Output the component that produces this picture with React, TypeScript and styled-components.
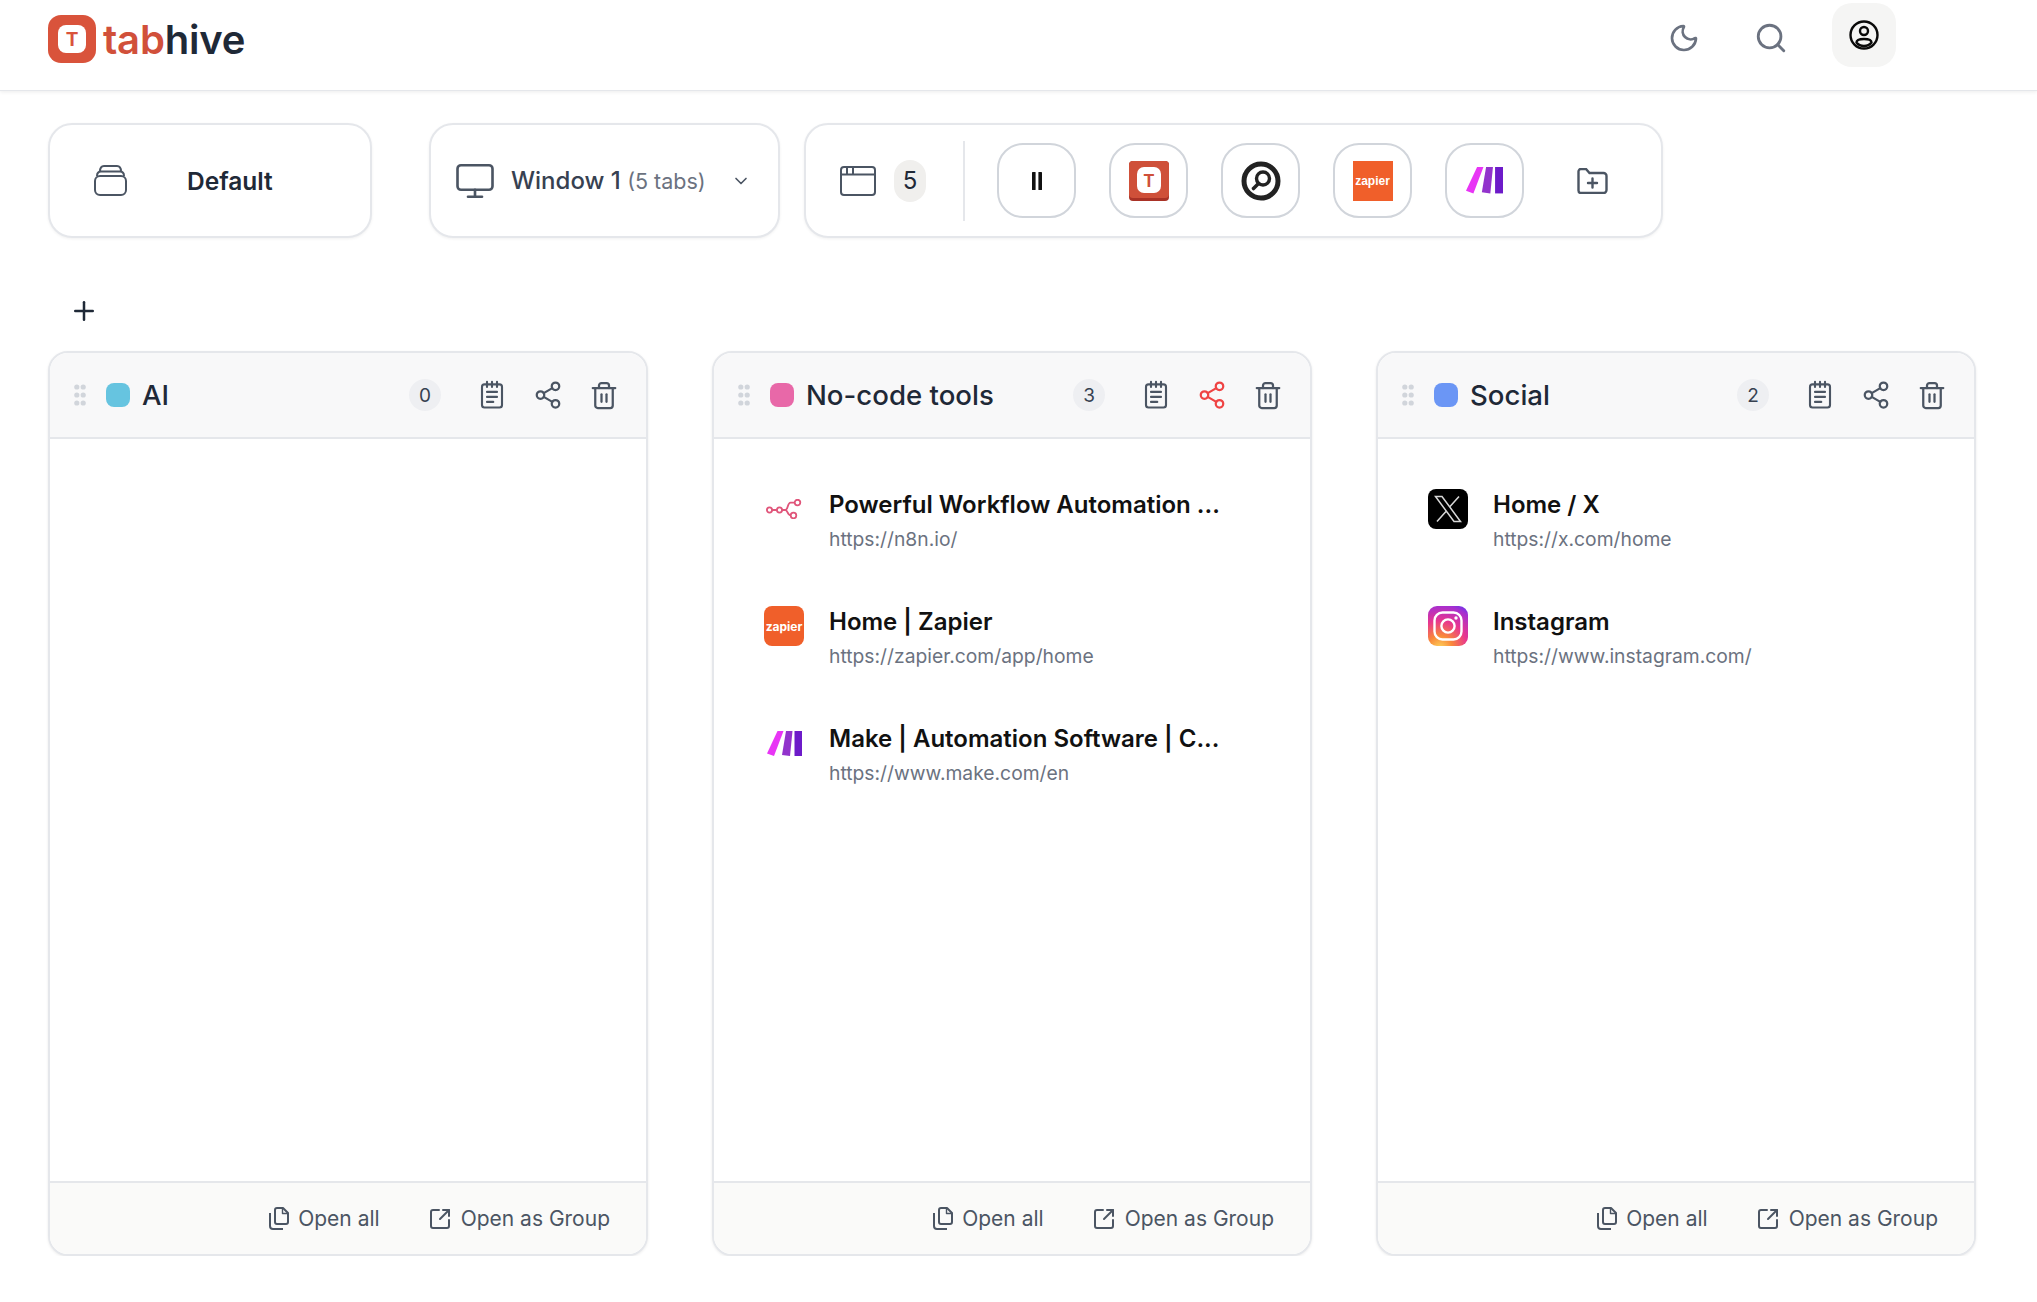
import styled, { createGlobalStyle } from "styled-components";
import { Moon, Search, Monitor, ChevronDown, Plus, Share2, Trash2, SquareArrowOutUpRight } from "lucide-react";

// ------- data -------
type Favicon = "n8n" | "zapier" | "make" | "x" | "instagram";

const groups: {
  name: string;
  color: string;
  active?: boolean;
  tabs: { title: string; url: string; icon: Favicon }[];
}[] = [
  { name: "AI", color: "#66c4e0", tabs: [] },
  {
    name: "No-code tools",
    color: "#e868a8",
    active: true,
    tabs: [
      { title: "Powerful Workflow Automation ...", url: "https://n8n.io/", icon: "n8n" },
      { title: "Home | Zapier", url: "https://zapier.com/app/home", icon: "zapier" },
      { title: "Make | Automation Software | C...", url: "https://www.make.com/en", icon: "make" },
    ],
  },
  {
    name: "Social",
    color: "#6b96f5",
    tabs: [
      { title: "Home / X", url: "https://x.com/home", icon: "x" },
      { title: "Instagram", url: "https://www.instagram.com/", icon: "instagram" },
    ],
  },
];

// ------- drawn icons -------
function TabhiveMark({ size }: { size: number }) {
  return (
    <svg width={size} height={size} viewBox="0 0 48 48">
      <rect width="48" height="48" rx="13" fill="#d9533b" />
      <rect x="10" y="10" width="28" height="28" rx="8" fill="#fff" />
      <text x="24" y="31" textAnchor="middle" fontFamily="Inter, sans-serif" fontWeight="700" fontSize="19" fill="#d9533b">
        T
      </text>
    </svg>
  );
}

function TabhiveTile() {
  return (
    <svg width="40" height="40" viewBox="0 0 40 40">
      <rect width="40" height="40" rx="4" fill="#a93226" />
      <rect width="40" height="37" rx="4" fill="#cf5039" />
      <rect x="8" y="6" width="24" height="26" rx="7" fill="#fff" />
      <text x="20" y="25.500" textAnchor="middle" fontFamily="Inter, sans-serif" fontWeight="700" fontSize="17" fill="#cf5039">
        T
      </text>
    </svg>
  );
}

function PieMark() {
  return (
    <svg width="40" height="40" viewBox="0 0 40 40" fill="none" stroke="#222" strokeLinecap="round">
      <circle cx="20" cy="20" r="17" strokeWidth="5" />
      <circle cx="22" cy="17.500" r="6.500" strokeWidth="3.400" />
      <path d="M17.500 22.500 12.500 27.500" strokeWidth="3.600" />
    </svg>
  );
}

function MakeMark({ width }: { width: number }) {
  return (
    <svg width={width} height={(width * 25) / 35} viewBox="0 0 35 25">
      <path d="M0 22.500 10.500 0h6L7 25z" fill="#e835f5" />
      <path d="M15 24 19 0h6.500L23 25z" fill="#9233cc" />
      <path d="M27.500 0H35v25h-7.500z" fill="#6d1bc9" />
    </svg>
  );
}

function N8nMark() {
  return (
    <svg width="36" height="20" viewBox="0 0 36 20" fill="none" stroke="#e0557a" strokeWidth="1.800">
      <circle cx="3.500" cy="11" r="2.600" />
      <circle cx="13.500" cy="11" r="2.600" />
      <circle cx="31.500" cy="3.600" r="2.800" />
      <circle cx="27.500" cy="16.500" r="2.800" />
      <path d="M6 11h5M16 11h3.500c2.500 0 2-7.400 5-7.400h4.200M19.500 11c2 0 2 5.500 5.300 5.500" />
    </svg>
  );
}

function XMark() {
  return (
    <svg width="40" height="40" viewBox="0 0 40 40" fill="none">
      <rect width="40" height="40" rx="8" fill="#000" />
      <path d="M7.500 7.500h6.500l18.500 25H26zM31 7.500 21.800 17.800M9 32.500l9.600-10.800" stroke="#d8d8d8" strokeWidth="1.500" />
    </svg>
  );
}

function InstagramMark() {
  return (
    <svg width="40" height="40" viewBox="0 0 40 40" fill="none">
      <defs>
        <radialGradient id="ig" cx="0.3" cy="1.05" r="1.25">
          <stop offset="0" stopColor="#fdd35a" />
          <stop offset="0.25" stopColor="#f9873a" />
          <stop offset="0.55" stopColor="#e8368f" />
          <stop offset="0.85" stopColor="#a62fd0" />
          <stop offset="1" stopColor="#5a35f0" />
        </radialGradient>
      </defs>
      <rect width="40" height="40" rx="9" fill="url(#ig)" />
      <rect x="6.500" y="6.500" width="27" height="27" rx="8" stroke="#fff" strokeWidth="2.400" />
      <circle cx="20" cy="20" r="6.600" stroke="#fff" strokeWidth="2.400" />
      <circle cx="28" cy="12" r="1.700" fill="#fff" />
    </svg>
  );
}

function UserIcon() {
  return (
    <svg width="32" height="32" viewBox="0 0 32 32" fill="none" stroke="#0a0a0a" strokeWidth="2.400">
      <circle cx="16" cy="16" r="13.500" />
      <circle cx="16" cy="12" r="4" />
      <path d="M8.500 23.500c0-2.500 3-3.500 7.500-3.500s7.500 1 7.500 3.500c-1.500 2-4.500 3.500-7.500 3.500s-6-1.500-7.500-3.500z" />
    </svg>
  );
}

function StackIcon() {
  return (
    <svg width="33" height="31" viewBox="0 0 33 31" fill="none" stroke="#4b5563" strokeWidth="2">
      <rect x="1" y="11" width="31" height="19" rx="5" />
      <path d="M3 11c0-3 1.500-4.500 4-4.500h19c2.500 0 4 1.500 4 4.500M6 6.500c0-3 1-5.500 4-5.500h13c3 0 4 2.500 4 5.500" />
    </svg>
  );
}

function BrowserIcon() {
  return (
    <svg width="36" height="30" viewBox="0 0 36 30" fill="none" stroke="#4b5563" strokeWidth="2">
      <rect x="1" y="1" width="34" height="28" rx="3" />
      <path d="M1 8.500h34M7 1v7.500M13 1v7.500" />
    </svg>
  );
}

function FolderPlusIcon() {
  return (
    <svg width="31" height="26" viewBox="0 0 31 26" fill="none" stroke="#4b5563" strokeWidth="2.400" strokeLinecap="round">
      <path d="M1.500 3.500a2.500 2.500 0 0 1 2.500-2.500h5l3.500 4h14a3 3 0 0 1 3 3V22a3 3 0 0 1-3 3H4a2.500 2.500 0 0 1-2.500-2.500z" />
      <path d="M15.500 10.500v9M11 15h9" />
    </svg>
  );
}

function PauseIcon() {
  return (
    <svg width="10" height="18" viewBox="0 0 10 18" fill="#111">
      <rect width="3.600" height="18" rx="0.600" />
      <rect x="6.400" width="3.600" height="18" rx="0.600" />
    </svg>
  );
}

function NotesIcon() {
  return (
    <svg width="30" height="30" viewBox="0 0 24 24" fill="none" stroke="#4b5563" strokeWidth="1.700" strokeLinecap="round">
      <rect x="4" y="3.500" width="16" height="18.500" rx="2" />
      <path d="M8 1.500v4M12 1.500v4M16 1.500v4M8 9.500h8M8 13.500h8M8 17.500h5" />
    </svg>
  );
}

function CopyIcon() {
  return (
    <svg width="20" height="23" viewBox="0 0 20 23" fill="none" stroke="#4b5563" strokeWidth="2" strokeLinejoin="round">
      <path d="M6 3a2 2 0 0 1 2-2h6l5 5v9a2 2 0 0 1-2 2H8a2 2 0 0 1-2-2z" />
      <path d="M13.500 1v5.500H19" strokeWidth="1.400" />
      <path d="M1 6v13a3 3 0 0 0 3 3h10" />
    </svg>
  );
}

function GripIcon() {
  return (
    <svg width="12" height="22" viewBox="0 0 12 22" fill="#d1d5db">
      {[3, 11, 19].map((y) => (
        <g key={y}>
          <circle cx="2.800" cy={y} r="2.600" />
          <circle cx="9.200" cy={y} r="2.600" />
        </g>
      ))}
    </svg>
  );
}

function TabFavicon({ icon }: { icon: Favicon }) {
  if (icon === "n8n") return <N8nMark />;
  if (icon === "zapier") return <ZapierRounded>zapier</ZapierRounded>;
  if (icon === "make") return <MakeMark width={35} />;
  if (icon === "x") return <XMark />;
  return <InstagramMark />;
}

export default function App() {
  return (
    <>
      <GlobalStyle />
      <TopBar>
        <Brand>
          <TabhiveMark size={48} />
          <BrandName>
            <span>tab</span>hive
          </BrandName>
        </Brand>
        <TopActions>
          <TopIcon>
            <Moon size={32} strokeWidth={2} color="#6b7280" />
          </TopIcon>
          <TopIcon>
            <Search size={34} strokeWidth={2} color="#6b7280" />
          </TopIcon>
          <AvatarButton>
            <UserIcon />
          </AvatarButton>
        </TopActions>
      </TopBar>

      <Toolbar>
        <WorkspaceCard>
          <StackIcon />
          <WorkspaceName>Default</WorkspaceName>
        </WorkspaceCard>
        <WindowCard>
          <Monitor size={42} strokeWidth={1.500} color="#4b5563" />
          <WindowName>
            Window 1 <small>(5 tabs)</small>
          </WindowName>
          <ChevronDown size={20} strokeWidth={2} color="#4b5563" />
        </WindowCard>
        <TabsCard>
          <BrowserIcon />
          <TabCount>5</TabCount>
          <Divider />
          <PinnedRow>
            <PinnedButton>
              <PauseIcon />
            </PinnedButton>
            <PinnedButton>
              <TabhiveTile />
            </PinnedButton>
            <PinnedButton>
              <PieMark />
            </PinnedButton>
            <PinnedButton>
              <ZapierSquare>zapier</ZapierSquare>
            </PinnedButton>
            <PinnedButton>
              <MakeMark width={37} />
            </PinnedButton>
          </PinnedRow>
          <FolderSlot>
            <FolderPlusIcon />
          </FolderSlot>
        </TabsCard>
      </Toolbar>

      <AddRow>
        <Plus size={30} strokeWidth={2} color="#1f2937" />
      </AddRow>

      <Board>
        {groups.map((group) => (
          <GroupCard key={group.name}>
            <GroupHead>
              <GripIcon />
              <GroupDot $color={group.color} />
              <GroupName>{group.name}</GroupName>
              <CountBadge>{group.tabs.length}</CountBadge>
              <HeadIcons>
                <HeadIcon>
                  <NotesIcon />
                </HeadIcon>
                <HeadIcon>
                  <Share2 size={30} strokeWidth={1.800} color={group.active ? "#ef4444" : "#4b5563"} />
                </HeadIcon>
                <HeadIcon>
                  <Trash2 size={31} strokeWidth={1.800} color="#4b5563" />
                </HeadIcon>
              </HeadIcons>
            </GroupHead>
            <GroupBody>
              {group.tabs.map((tab) => (
                <TabRow key={tab.url}>
                  <FaviconBox>
                    <TabFavicon icon={tab.icon} />
                  </FaviconBox>
                  <div>
                    <TabTitle>{tab.title}</TabTitle>
                    <TabUrl>{tab.url}</TabUrl>
                  </div>
                </TabRow>
              ))}
            </GroupBody>
            <GroupFoot>
              <FootAction>
                <CopyIcon />
                Open all
              </FootAction>
              <FootAction>
                <SquareArrowOutUpRight size={24} strokeWidth={2} color="#4b5563" />
                Open as Group
              </FootAction>
            </GroupFoot>
          </GroupCard>
        ))}
      </Board>
    </>
  );
}

// ------- component styles -------
const GlobalStyle = createGlobalStyle`
  body {
    margin: 0;
    background: #fff;
    font-family: Inter, "Liberation Sans", sans-serif;
    color: #1f2937;
  }
`;

const TopBar = styled.header`
  height: 91px;
  box-sizing: border-box;
  padding: 0 141px 0 48px;
  display: flex;
  align-items: center;
  justify-content: space-between;
  border-bottom: 1px solid #e5e7eb;
  box-shadow: 0 1px 4px rgba(0, 0, 0, 0.08);
`;

const Brand = styled.div`
  display: flex;
  align-items: center;
  gap: 7px;
  margin-top: -12px;
`;

const BrandName = styled.div`
  font-size: 40px;
  font-weight: 600;
  letter-spacing: -0.2px;
  color: #1f2937;

  & > span {
    color: #d1503a;
  }
`;

const TopActions = styled.div`
  display: flex;
  align-items: flex-start;
  gap: 23px;
  align-self: flex-start;
  padding-top: 3px;
`;

const TopIcon = styled.button`
  width: 64px;
  height: 64px;
  padding: 0;
  margin-top: 3px;
  border: 0;
  background: none;
  display: flex;
  align-items: center;
  justify-content: center;
`;

const AvatarButton = styled.button`
  width: 64px;
  height: 64px;
  padding: 0;
  margin-left: 6px;
  border: 0;
  border-radius: 20px;
  background: #f5f5f4;
  display: flex;
  align-items: center;
  justify-content: center;
`;

const Toolbar = styled.div`
  display: flex;
  align-items: stretch;
  height: 115px;
  margin: 32px 0 0 48px;
`;

const ToolCard = styled.div`
  box-sizing: border-box;
  display: flex;
  align-items: center;
  background: #fff;
  border: 2px solid #e5e7eb;
  border-radius: 24px;
  box-shadow: 0 1px 3px rgba(0, 0, 0, 0.06);
`;

const WorkspaceCard = styled(ToolCard)`
  width: 324px;
  padding-left: 44px;
  gap: 60px;
`;

const WorkspaceName = styled.span`
  font-size: 24.5px;
  font-weight: 600;
  color: #1f2937;
`;

const WindowCard = styled(ToolCard)`
  width: 351px;
  margin-left: 57px;
  padding-left: 23px;
  gap: 15px;
`;

const WindowName = styled.span`
  width: 205px;
  font-size: 24px;
  font-weight: 500;
  color: #374151;

  & > small {
    font-size: 21.500px;
    font-weight: 400;
    color: #6b7280;
  }
`;

const TabsCard = styled(ToolCard)`
  width: 859px;
  margin-left: 24px;
  padding-left: 34px;
`;

const TabCount = styled.span`
  width: 32px;
  height: 42px;
  margin-left: 18px;
  border-radius: 16px;
  background: #f0efed;
  display: flex;
  align-items: center;
  justify-content: center;
  font-size: 24px;
  color: #1f2937;
`;

const Divider = styled.div`
  width: 2px;
  height: 80px;
  margin: 0 32px 0 37px;
  background: #e5e7eb;
`;

const PinnedRow = styled.div`
  display: flex;
  gap: 33px;
`;

const PinnedButton = styled.button`
  width: 79px;
  height: 75px;
  padding: 0;
  border: 2px solid #d1d5db;
  border-radius: 26px;
  background: #fff;
  display: flex;
  align-items: center;
  justify-content: center;
`;

const ZapierSquare = styled.span`
  width: 40px;
  height: 40px;
  background: #f05f2a;
  color: #fff;
  font-size: 12px;
  font-weight: 700;
  display: flex;
  align-items: center;
  justify-content: center;
`;

const ZapierRounded = styled(ZapierSquare)`
  border-radius: 8px;
`;

const FolderSlot = styled.div`
  margin-left: 53px;
  display: flex;
`;

const AddRow = styled.div`
  height: 113px;
  padding-left: 69px;
  box-sizing: border-box;
  display: flex;
  align-items: flex-start;
  padding-top: 58px;
`;

const Board = styled.div`
  display: grid;
  grid-template-columns: repeat(3, 600px);
  column-gap: 64px;
  padding-left: 48px;
`;

const GroupCard = styled.section`
  box-sizing: border-box;
  height: 905px;
  display: flex;
  flex-direction: column;
  border: 2px solid #e5e7eb;
  border-radius: 20px;
  overflow: hidden;
  background: #fff;
  box-shadow: 0 1px 3px rgba(0, 0, 0, 0.08);
`;

const GroupHead = styled.div`
  box-sizing: border-box;
  height: 86px;
  flex: none;
  display: flex;
  align-items: center;
  padding: 0 27px 0 24px;
  background: #f8f8f9;
  border-bottom: 2px solid #e5e7eb;
`;

const GroupDot = styled.span<{ $color: string }>`
  width: 24px;
  height: 24px;
  margin-left: 20px;
  flex: none;
  border-radius: 8px;
  background: ${(p) => p.$color};
`;

const GroupName = styled.h3`
  flex: 1;
  margin: 0 0 0 12px;
  font-size: 27.600px;
  font-weight: 500;
  color: #1f2937;
`;

const CountBadge = styled.span`
  width: 32px;
  height: 32px;
  border-radius: 50%;
  background: #eeeff2;
  display: flex;
  align-items: center;
  justify-content: center;
  font-size: 19px;
  color: #374151;
`;

const HeadIcons = styled.div`
  display: flex;
  gap: 26px;
  margin-left: 36px;
`;

const HeadIcon = styled.button`
  width: 30px;
  height: 30px;
  padding: 0;
  border: 0;
  background: none;
  display: flex;
  align-items: center;
  justify-content: center;
`;

const GroupBody = styled.div`
  flex: 1;
  display: flex;
  flex-direction: column;
  gap: 27px;
  padding: 50px 50px 0;
`;

const TabRow = styled.div`
  height: 90px;
  display: flex;
  gap: 25px;
`;

const FaviconBox = styled.div`
  width: 40px;
  height: 40px;
  flex: none;
  display: flex;
  align-items: center;
  justify-content: center;
`;

const TabTitle = styled.div`
  font-size: 24px;
  line-height: 32px;
  font-weight: 600;
  color: #111;
  white-space: nowrap;
`;

const TabUrl = styled.div`
  margin-top: 4px;
  font-size: 19.300px;
  line-height: 28px;
  color: #6b7280;
`;

const GroupFoot = styled.div`
  box-sizing: border-box;
  height: 73px;
  flex: none;
  display: flex;
  align-items: center;
  justify-content: flex-end;
  gap: 48px;
  padding-right: 36px;
  background: #fafaf9;
  border-top: 2px solid #e5e7eb;
`;

const FootAction = styled.button`
  padding: 0;
  border: 0;
  background: none;
  display: flex;
  align-items: center;
  gap: 9px;
  font-family: inherit;
  font-size: 21px;
  color: #4b5563;
`;
